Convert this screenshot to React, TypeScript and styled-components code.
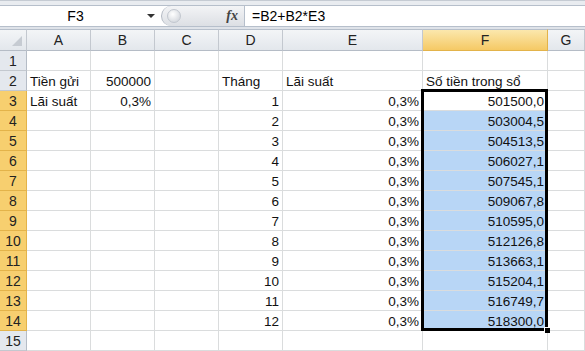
import styled, { createGlobalStyle } from 'styled-components'

const GlobalStyle = createGlobalStyle`
	html, body {
		margin: 0;
		padding: 0;
		background: #dfe3e9;
		overflow: hidden;
	}
	body {
		font-family: "Liberation Sans", Arial, sans-serif;
		font-size: 13px;
		color: #000;
	}
`

const COLS = [64, 64, 64, 64, 140, 125]
const SELECTED_COL = 5

const Page = styled.div`
	width: 585px;
	height: 351px;
	display: flex;
	flex-direction: column;
	background: #dfe3e9;
`

const TopBand = styled.div`
	height: 4px;
	border-top: 1px solid #c5cbd3;
	background: #e9ecf0;
`

const FormulaBar = styled.div`
	height: 22px;
	display: flex;
	align-items: stretch;
	background: #fff;
	border-top: 1px solid #b6bfcb;
	border-bottom: 1px solid #b6bfcb;
	box-sizing: border-box;
`

const NameBox = styled.div`
	width: 161px;
	position: relative;
	display: flex;
	align-items: center;
	justify-content: center;
	padding-right: 10px;
	box-sizing: border-box;
	font-size: 14px;
`

const DropArrow = styled.span`
	position: absolute;
	right: 6px;
	top: 8px;
	width: 0;
	height: 0;
	border-left: 4px solid transparent;
	border-right: 4px solid transparent;
	border-top: 4px solid #333;
`

const Splitter = styled.div`
	width: 84px;
	display: flex;
	align-items: center;
	background: linear-gradient(#f3f4f6, #dcdfe4);
	border-radius: 11px 0 0 11px;
	border-left: 1px solid #b0b7c1;
	border-right: 1px solid #b6bfcb;
	box-sizing: border-box;
`

const Knob = styled.span`
	width: 12px;
	height: 12px;
	margin-left: 5px;
	border-radius: 50%;
	background: radial-gradient(circle at 40% 35%, #fff, #c9ced5);
	border: 1px solid #c2c7cf;
`

const FxLabel = styled.span`
	margin-left: auto;
	margin-right: 6px;
	font-family: "Liberation Serif", serif;
	font-style: italic;
	font-weight: bold;
	font-size: 14px;
	color: #444;
`

const FormulaText = styled.div`
	flex: 1;
	display: flex;
	align-items: center;
	padding-left: 7px;
	font-size: 14px;
`

const Gap = styled.div`
	height: 2px;
`

const Sheet = styled.div`
	position: relative;
	flex: 1;
	display: grid;
	grid-template-columns: 27px ${COLS.map((w) => `${w}px`).join(' ')} 1fr;
	grid-template-rows: 22px;
	grid-auto-rows: 20px;
	background: #fff;
`

const ColHead = styled.div<{ $on?: boolean }>`
	display: flex;
	align-items: center;
	justify-content: center;
	font-size: 14px;
	color: #222;
	box-sizing: border-box;
	border-top: 1px solid #b6bfcb;
	border-right: 1px solid ${(p) => (p.$on ? '#e3b34a' : '#c3c8cf')};
	border-bottom: 1px solid ${(p) => (p.$on ? '#e3b34a' : '#b5bcc6')};
	background: ${(p) =>
		p.$on ? 'linear-gradient(#fbe7ad, #f5c965)' : 'linear-gradient(#f3f5f7, #e3e7ec)'};
`

const Corner = styled(ColHead)`
	position: relative;
	&::after {
		content: '';
		position: absolute;
		right: 4px;
		bottom: 4px;
		border-left: 10px solid transparent;
		border-bottom: 10px solid #c6cbd2;
	}
`

const RowHead = styled.div<{ $on?: boolean }>`
	display: flex;
	align-items: flex-end;
	justify-content: center;
	padding-bottom: 1px;
	font-size: 14px;
	color: #222;
	box-sizing: border-box;
	border-right: 1px solid ${(p) => (p.$on ? '#e3b34a' : '#b5bcc6')};
	border-bottom: 1px solid ${(p) => (p.$on ? '#e3b34a' : '#c3c8cf')};
	background: ${(p) => (p.$on ? '#f7cf6f' : '#e4e8ee')};
`

const Cell = styled.div<{ $right?: boolean; $fill?: boolean }>`
	display: flex;
	align-items: flex-end;
	justify-content: ${(p) => (p.$right ? 'flex-end' : 'flex-start')};
	padding: 0 3px 1px;
	box-sizing: border-box;
	white-space: nowrap;
	overflow: visible;
	border-right: 1px solid #dadcdd;
	border-bottom: 1px solid #dadcdd;
	background: ${(p) => (p.$fill ? '#b8d6f6' : '#fff')};
	font-size: 13.5px;
	color: #111;
`

const Selection = styled.div`
	position: absolute;
	left: 421px;
	top: 60px;
	width: 127px;
	height: 242px;
	border: 3px solid #000;
	box-sizing: border-box;
	pointer-events: none;

	&::after {
		content: '';
		position: absolute;
		right: -5px;
		bottom: -5px;
		width: 5px;
		height: 5px;
		background: #000;
		border-left: 1px solid #fff;
		border-top: 1px solid #fff;
	}
`

type Val = { t: string; r?: boolean }

const rates = [
	'501500,0', '503004,5', '504513,5', '506027,1', '507545,1', '509067,8',
	'510595,0', '512126,8', '513663,1', '515204,1', '516749,7', '518300,0',
]

function buildRows(): Val[][] {
	const rows: Val[][] = []
	for (let r = 1; r <= 15; r++) {
		const row: Val[] = [{ t: '' }, { t: '' }, { t: '' }, { t: '' }, { t: '' }, { t: '' }, { t: '' }]
		if (r === 2) {
			row[0] = { t: 'Tiền gửi' }
			row[1] = { t: '500000', r: true }
			row[3] = { t: 'Tháng' }
			row[4] = { t: 'Lãi suất' }
			row[5] = { t: 'Số tiền trong sổ' }
		}
		if (r === 3) {
			row[0] = { t: 'Lãi suất' }
			row[1] = { t: '0,3%', r: true }
		}
		if (r >= 3 && r <= 14) {
			row[3] = { t: String(r - 2), r: true }
			row[4] = { t: '0,3%', r: true }
			row[5] = { t: rates[r - 3], r: true }
		}
		rows.push(row)
	}
	return rows
}

function App() {
	const rows = buildRows()
	const letters = ['A', 'B', 'C', 'D', 'E', 'F', 'G']
	return (
		<Page>
			<GlobalStyle />
			<TopBand />
			<FormulaBar>
				<NameBox>
					F3
					<DropArrow />
				</NameBox>
				<Splitter>
					<Knob />
					<FxLabel>fx</FxLabel>
				</Splitter>
				<FormulaText>=B2+B2*E3</FormulaText>
			</FormulaBar>
			<Gap />
			<Sheet>
				<Corner />
				{letters.map((l, i) => (
					<ColHead key={l} $on={i === SELECTED_COL}>
						{l}
					</ColHead>
				))}
				{rows.map((row, ri) => {
					const n = ri + 1
					const on = n >= 3 && n <= 14
					return [
						<RowHead key={`h${n}`} $on={on}>
							{n}
						</RowHead>,
						...row.map((v, ci) => (
							<Cell
								key={`${n}-${ci}`}
								$right={v.r}
								$fill={ci === SELECTED_COL && n >= 4 && n <= 14}
							>
								{v.t}
							</Cell>
						)),
					]
				})}
				<Selection />
			</Sheet>
		</Page>
	)
}

export default App
